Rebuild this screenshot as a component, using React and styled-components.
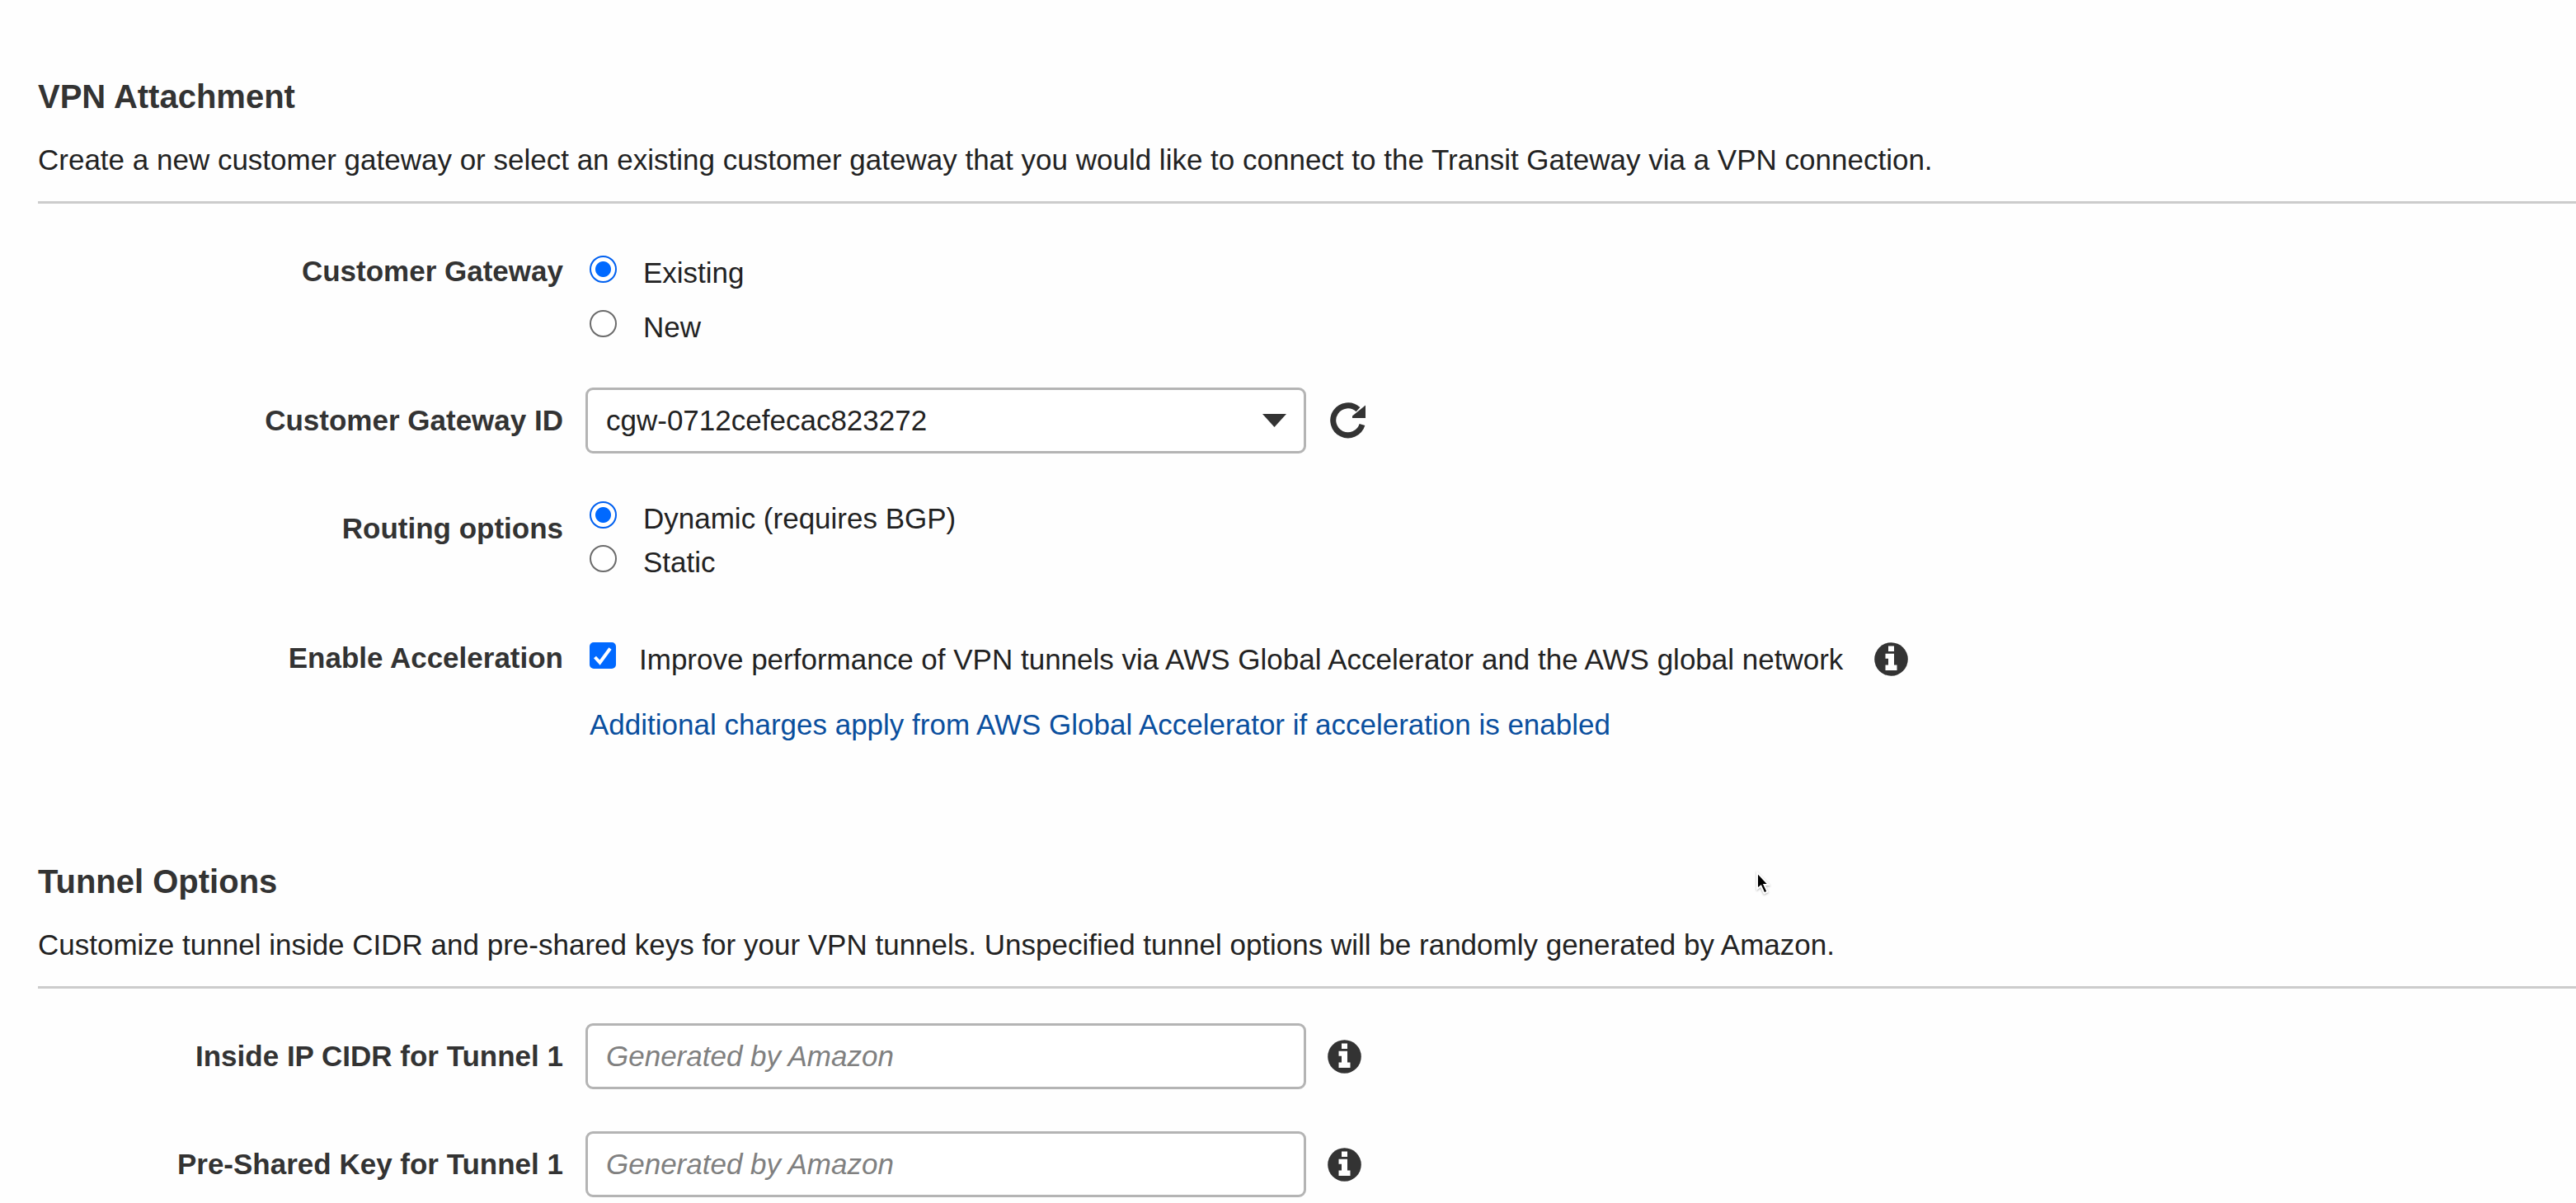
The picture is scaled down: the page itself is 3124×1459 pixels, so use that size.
import React, { useState } from 'react';
import styled, { createGlobalStyle, css } from 'styled-components';

const GlobalStyle = createGlobalStyle`
  *, *::before, *::after { box-sizing: border-box; }
  body {
    margin: 0;
    background: #fefefe;
    color: #222;
    font-family: "Liberation Sans", Arial, Helvetica, sans-serif;
    font-size: 35px;
    line-height: 40px;
  }
`;

const Page = styled.main`
  position: relative;
  padding: 93px 0 6px 46px;
  display: flex;
  flex-direction: column;
  gap: 146px;
`;

const SectionHeader = styled.header`
  display: flex;
  flex-direction: column;
  gap: 33px;
  padding-bottom: 30px;
  border-bottom: 3px solid #ccc;
`;

const Title = styled.h2`
  margin: 0;
  color: #333;
  font-size: 40px;
  line-height: 48px;
`;

const Description = styled.p`
  margin: 0;
`;

const Row = styled.div`
  display: grid;
  grid-template-columns: 637px minmax(0, 1fr);
  column-gap: 27px;
  align-items: ${(p) => (p.$top ? 'start' : 'center')};
  margin-top: ${(p) => p.$space}px;
`;

const labelStyle = css`
  color: #333;
  font-weight: bold;
  text-align: right;
`;

const Label = styled.label`
  ${labelStyle}
`;

const GroupLabel = styled.span`
  ${labelStyle}
  padding-top: ${(p) => p.$drop || 0}px;
`;

const Control = styled.div`
  display: flex;
  align-items: center;
  gap: 26px;
`;

const OptionList = styled.div`
  display: flex;
  flex-direction: column;
  gap: ${(p) => p.$gap}px;
  padding: ${(p) => p.$inset || 0}px 0 0 5px;
`;

const Option = styled.label`
  display: flex;
  align-items: flex-start;
  gap: 32px;
`;

const OptionText = styled.span`
  padding-top: 1px;
`;

const Radio = styled.input`
  appearance: none;
  flex: none;
  width: 33px;
  height: 33px;
  margin: 0;
  border: 2px solid #6b6b6b;
  border-radius: 50%;
  background: #fff;
  &:checked {
    border-color: #0060f0;
    background: radial-gradient(circle, #0069ff 9px, #fff 10px);
  }
`;

const CheckLine = styled.div`
  display: flex;
  align-items: center;
  gap: 38px;
`;

const CheckBoxWrap = styled.span`
  position: relative;
  flex: none;
  width: 32px;
  height: 32px;
`;

const CheckBox = styled.input`
  appearance: none;
  display: block;
  width: 32px;
  height: 32px;
  margin: 0;
  border: 2px solid #767676;
  border-radius: 5px;
  background: #fff;
  &:checked {
    border-color: #0069ff;
    background: #0069ff;
  }
`;

const Tick = styled.svg`
  position: absolute;
  inset: 0;
  pointer-events: none;
`;

const CheckLabel = styled.label`
  display: flex;
  align-items: flex-start;
  gap: 28px;
`;

const Link = styled.a`
  align-self: flex-start;
  color: #0a4f9e;
  text-decoration: none;
`;

const fieldStyle = css`
  width: 100%;
  height: 80px;
  margin: 0;
  padding: 0 22px;
  border: 3px solid #b4b4b4;
  border-radius: 9px;
  background: #fff;
  color: #222;
  font: inherit;
`;

const FieldBox = styled.div`
  position: relative;
  flex: 0 1 874px;
`;

const Select = styled.select`
  ${fieldStyle}
  display: block;
  appearance: none;
`;

const TextInput = styled.input`
  ${fieldStyle}
  display: block;
  &::placeholder {
    color: #808080;
    font-style: italic;
    opacity: 1;
  }
`;

const Caret = styled.svg`
  position: absolute;
  top: 32px;
  right: 24px;
  pointer-events: none;
`;

const IconButton = styled.button`
  display: flex;
  flex: none;
  margin: 0;
  padding: 0;
  border: 0;
  background: none;
  color: #333;
`;

const Pointer = styled.svg`
  position: absolute;
  top: 1054px;
  left: 2127px;
  pointer-events: none;
  filter: drop-shadow(0 1px 1px rgba(0, 0, 0, 0.3));
`;

function InfoButton({ label }) {
  return (
    <IconButton type="button" aria-label={label}>
      <svg width="41" height="41" viewBox="0 0 41 41" aria-hidden="true">
        <circle cx="20.5" cy="20.5" r="20.3" fill="currentColor" />
        <path d="M17 4.5h7v6.500h-7z M13.500 13.700h10.500v13.800h3.500v6.500h-14v-6.500h3.500v-7.800h-3.500z" fill="#fff" />
      </svg>
    </IconButton>
  );
}

function RefreshIcon() {
  return (
    <svg width="48" height="45" viewBox="0 0 48 45" aria-hidden="true">
      <path d="M42 27 A18 18 0 1 1 37 8.600" fill="none" stroke="currentColor" strokeWidth="7" />
      <path d="M46 3.500V19H30v-2.500z" fill="currentColor" />
    </svg>
  );
}

function RadioGroup({ name, options, labelledBy, gap, inset }) {
  const [value, setValue] = useState(options[0]);
  return (
    <OptionList role="radiogroup" aria-labelledby={labelledBy} $gap={gap} $inset={inset}>
      {options.map((option) => (
        <Option key={option}>
          <Radio
            type="radio"
            name={name}
            value={option}
            checked={value === option}
            onChange={() => setValue(option)}
          />
          <OptionText>{option}</OptionText>
        </Option>
      ))}
    </OptionList>
  );
}

function TextRow({ id, label, space }) {
  return (
    <Row $space={space}>
      <Label htmlFor={id}>{label}</Label>
      <Control>
        <FieldBox>
          <TextInput id={id} type="text" placeholder="Generated by Amazon" />
        </FieldBox>
        <InfoButton label={`About ${label}`} />
      </Control>
    </Row>
  );
}

export default function App() {
  return (
    <>
      <GlobalStyle />
      <Page>
        <section>
          <SectionHeader>
            <Title>VPN Attachment</Title>
            <Description>
              Create a new customer gateway or select an existing customer gateway that you would
              like to connect to the Transit Gateway via a VPN connection.
            </Description>
          </SectionHeader>

          <Row $top $space={62}>
            <GroupLabel id="gateway-label">Customer Gateway</GroupLabel>
            <RadioGroup
              name="gateway"
              labelledBy="gateway-label"
              options={['Existing', 'New']}
              gap={25}
              inset={1}
            />
          </Row>

          <Row $space={53}>
            <Label htmlFor="gateway-id">Customer Gateway ID</Label>
            <Control>
              <FieldBox>
                <Select id="gateway-id" defaultValue="cgw-0712cefecac823272">
                  <option>cgw-0712cefecac823272</option>
                </Select>
                <Caret width="29" height="16" viewBox="0 0 29 16" aria-hidden="true">
                  <path d="M0 0h29L14.500 16z" fill="#333" />
                </Caret>
              </FieldBox>
              <IconButton type="button" aria-label="Refresh">
                <RefreshIcon />
              </IconButton>
            </Control>
          </Row>

          <Row $top $space={58}>
            <GroupLabel id="routing-label" $drop={13}>Routing options</GroupLabel>
            <RadioGroup
              name="routing"
              labelledBy="routing-label"
              options={['Dynamic (requires BGP)', 'Static']}
              gap={12}
            />
          </Row>

          <Row $top $space={76}>
            <GroupLabel id="acceleration-label">Enable Acceleration</GroupLabel>
            <OptionList role="group" aria-labelledby="acceleration-label" $gap={39} $inset={1}>
              <CheckLine>
                <CheckLabel>
                  <CheckBoxWrap>
                    <CheckBox type="checkbox" defaultChecked />
                    <Tick width="32" height="32" viewBox="0 0 32 32" aria-hidden="true">
                      <path d="M6.500 18l6 6.500L25 7.500" fill="none" stroke="#fff" strokeWidth="4" />
                    </Tick>
                  </CheckBoxWrap>
                  <OptionText>
                    Improve performance of VPN tunnels via AWS Global Accelerator and the AWS
                    global network
                  </OptionText>
                </CheckLabel>
                <InfoButton label="About acceleration" />
              </CheckLine>
              <Link href="#pricing">
                Additional charges apply from AWS Global Accelerator if acceleration is enabled
              </Link>
            </OptionList>
          </Row>
        </section>

        <section>
          <SectionHeader>
            <Title>Tunnel Options</Title>
            <Description>
              Customize tunnel inside CIDR and pre-shared keys for your VPN tunnels. Unspecified
              tunnel options will be randomly generated by Amazon.
            </Description>
          </SectionHeader>
          <TextRow id="inside-cidr" label="Inside IP CIDR for Tunnel 1" space={42} />
          <TextRow id="shared-key" label="Pre-Shared Key for Tunnel 1" space={51} />
        </section>

        <Pointer width="24" height="36" viewBox="0 0 24 36" aria-hidden="true">
          <path
            d="M4 4v20l4.500-3.500 4 9 4-2-4-8.500H18z"
            fill="#000"
            stroke="#fff"
            strokeWidth="2"
          />
        </Pointer>
      </Page>
    </>
  );
}
